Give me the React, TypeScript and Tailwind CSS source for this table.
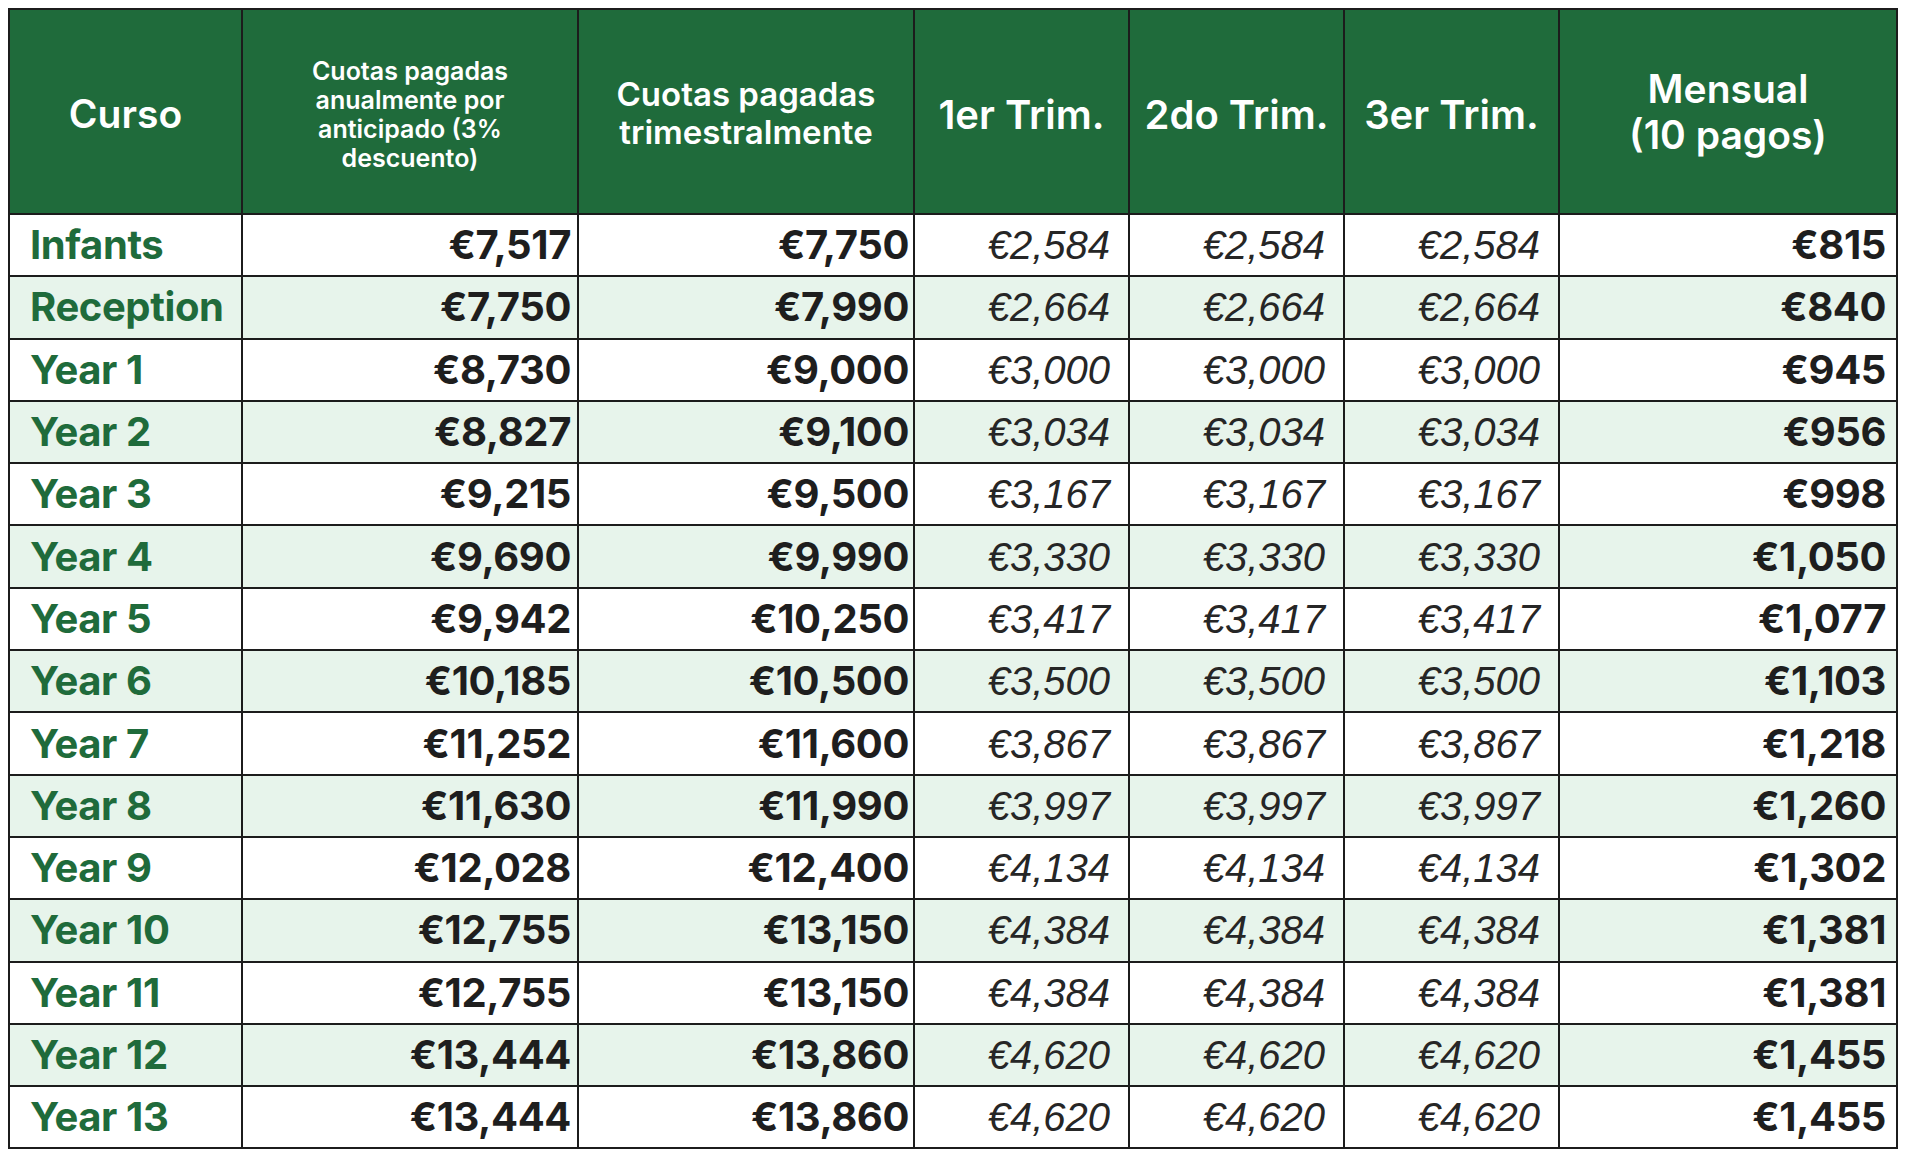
import React from 'react';

const rows: [string, string, string, string, string][] = [
  ['Infants', '€7,517', '€7,750', '€2,584', '€815'],
  ['Reception', '€7,750', '€7,990', '€2,664', '€840'],
  ['Year 1', '€8,730', '€9,000', '€3,000', '€945'],
  ['Year 2', '€8,827', '€9,100', '€3,034', '€956'],
  ['Year 3', '€9,215', '€9,500', '€3,167', '€998'],
  ['Year 4', '€9,690', '€9,990', '€3,330', '€1,050'],
  ['Year 5', '€9,942', '€10,250', '€3,417', '€1,077'],
  ['Year 6', '€10,185', '€10,500', '€3,500', '€1,103'],
  ['Year 7', '€11,252', '€11,600', '€3,867', '€1,218'],
  ['Year 8', '€11,630', '€11,990', '€3,997', '€1,260'],
  ['Year 9', '€12,028', '€12,400', '€4,134', '€1,302'],
  ['Year 10', '€12,755', '€13,150', '€4,384', '€1,381'],
  ['Year 11', '€12,755', '€13,150', '€4,384', '€1,381'],
  ['Year 12', '€13,444', '€13,860', '€4,620', '€1,455'],
  ['Year 13', '€13,444', '€13,860', '€4,620', '€1,455'],
];

const th = 'border-2 border-[#1c1c1c] bg-[#1f6b3b] text-white font-semibold text-center align-middle';
const td = 'border-2 border-[#1c1c1c] align-middle';
const bold = `${td} text-right text-[40px] font-bold text-[#1e1e1e] tracking-[-0.01em]`;
const italic = `${td} text-right pr-[18px] text-[40px] italic font-normal text-[#262626] font-['Liberation_Sans',Arial,sans-serif]`;

const App: React.FC = () => {
  return (
    <div className="min-h-screen bg-white p-2 font-['Inter',sans-serif]">
      <table className="table-fixed border-collapse w-[1888px]">
        <colgroup>
          <col className="w-[233px]" />
          <col className="w-[336px]" />
          <col className="w-[336px]" />
          <col className="w-[215px]" />
          <col className="w-[215px]" />
          <col className="w-[215px]" />
          <col className="w-[338px]" />
        </colgroup>
        <thead>
          <tr className="h-[205px]">
            <th className={`${th} pt-[6px] text-[39px]`}>Curso</th>
            <th className={`${th} pt-[6px] text-[25px] leading-[29px] px-10`}>
              Cuotas pagadas anualmente por anticipado (3% descuento)
            </th>
            <th className={`${th} pt-[2px] text-[33px] leading-[38px] px-3`}>
              Cuotas pagadas trimestralmente
            </th>
            <th className={`${th} pt-[6px] text-[40px]`}>1er Trim.</th>
            <th className={`${th} pt-[6px] text-[40px]`}>2do Trim.</th>
            <th className={`${th} pt-[6px] text-[40px]`}>3er Trim.</th>
            <th className={`${th} pt-[1px] text-[39px] leading-[46px]`}>
              Mensual
              <br />
              (10 pagos)
            </th>
          </tr>
        </thead>
        <tbody>
          {rows.map(([course, annual, term, quarter, monthly], i) => (
            <tr key={course} className={`h-[62.3px] ${i % 2 === 1 ? 'bg-[#e7f4eb]' : 'bg-white'}`}>
              <td className={`${td} pl-5 text-[40px] font-bold text-[#1f6b3b] whitespace-nowrap tracking-[-0.01em]`}>
                {course}
              </td>
              <td className={`${bold} pr-1.5`}>{annual}</td>
              <td className={`${bold} pr-1`}>{term}</td>
              <td className={italic}>{quarter}</td>
              <td className={italic}>{quarter}</td>
              <td className={italic}>{quarter}</td>
              <td className={`${bold} pr-2.5`}>{monthly}</td>
            </tr>
          ))}
        </tbody>
      </table>
    </div>
  );
};

export default App;
